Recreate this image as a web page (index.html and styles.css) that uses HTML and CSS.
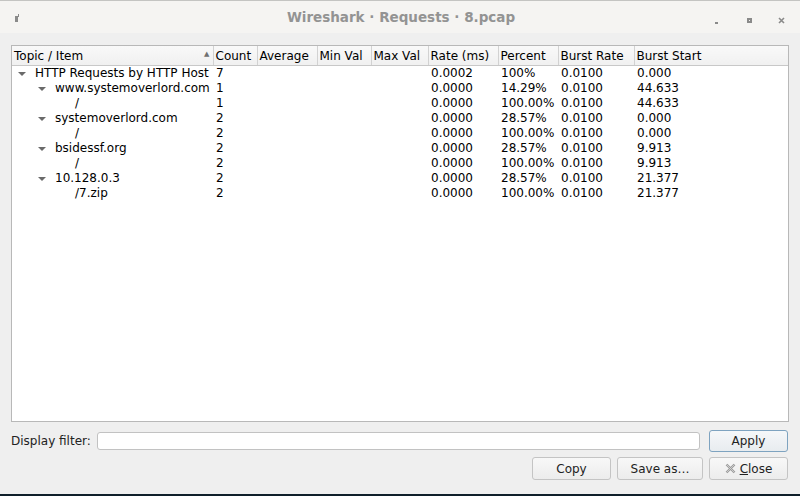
FILE: index.html
```html
<!DOCTYPE html>
<html>
<head>
<meta charset="utf-8">
<link rel="stylesheet" href="styles.css">
</head>
<body>
<div class="window">
  <div class="titlebar">
    <div class="tb-icon"><svg width="6" height="8" viewBox="0 0 6 8"><rect x="0" y="2" width="3" height="6" fill="#8a8a8a"/><rect x="3" y="0" width="1" height="3" fill="#8a8a8a"/></svg></div>
    <div class="tb-title">Wireshark · Requests · 8.pcap</div>
    <div class="tb-buttons">
      <span class="tb-btn"><svg width="8" height="8" viewBox="0 0 8 8"><rect x="1" y="5" width="3" height="2" fill="#8a8a8a"/></svg></span>
      <span class="tb-btn"><svg width="8" height="8" viewBox="0 0 8 8"><rect x="1" y="1" width="5" height="5" fill="#8a8a8a"/><rect x="3" y="3" width="1" height="1" fill="#f5f4f2"/></svg></span>
      <span class="tb-btn"><svg width="8" height="8" viewBox="0 0 8 8"><path d="M1 1 L6 6 M6 1 L1 6" stroke="#8a8a8a" stroke-width="1.6"/></svg></span>
    </div>
  </div>
  <div class="content">
    <div class="tree">
      <table>
        <colgroup>
          <col style="width:201px"><col style="width:44px"><col style="width:60px"><col style="width:54px"><col style="width:57px"><col style="width:70px"><col style="width:60px"><col style="width:76px"><col>
        </colgroup>
        <thead>
          <tr>
            <th class="sorted">Topic / Item<span class="sort">▲</span></th><th>Count</th><th>Average</th><th>Min Val</th><th>Max Val</th><th>Rate (ms)</th><th>Percent</th><th>Burst Rate</th><th class="last">Burst Start</th>
          </tr>
        </thead>
        <tbody>
          <tr><td class="l0"><span class="exp"></span>HTTP Requests by HTTP Host</td><td>7</td><td></td><td></td><td></td><td>0.0002</td><td>100%</td><td>0.0100</td><td>0.000</td></tr>
          <tr><td class="l1"><span class="exp"></span>www.systemoverlord.com</td><td>1</td><td></td><td></td><td></td><td>0.0000</td><td>14.29%</td><td>0.0100</td><td>44.633</td></tr>
          <tr><td class="l2">/</td><td>1</td><td></td><td></td><td></td><td>0.0000</td><td>100.00%</td><td>0.0100</td><td>44.633</td></tr>
          <tr><td class="l1"><span class="exp"></span>systemoverlord.com</td><td>2</td><td></td><td></td><td></td><td>0.0000</td><td>28.57%</td><td>0.0100</td><td>0.000</td></tr>
          <tr><td class="l2">/</td><td>2</td><td></td><td></td><td></td><td>0.0000</td><td>100.00%</td><td>0.0100</td><td>0.000</td></tr>
          <tr><td class="l1"><span class="exp"></span>bsidessf.org</td><td>2</td><td></td><td></td><td></td><td>0.0000</td><td>28.57%</td><td>0.0100</td><td>9.913</td></tr>
          <tr><td class="l2">/</td><td>2</td><td></td><td></td><td></td><td>0.0000</td><td>100.00%</td><td>0.0100</td><td>9.913</td></tr>
          <tr><td class="l1"><span class="exp"></span>10.128.0.3</td><td>2</td><td></td><td></td><td></td><td>0.0000</td><td>28.57%</td><td>0.0100</td><td>21.377</td></tr>
          <tr><td class="l2">/7.zip</td><td>2</td><td></td><td></td><td></td><td>0.0000</td><td>100.00%</td><td>0.0100</td><td>21.377</td></tr>
        </tbody>
      </table>
    </div>
    <div class="filter-row">
      <label class="filter-label">Display filter:</label>
      <div class="filter-input"></div>
      <button class="btn btn-default">Apply</button>
    </div>
    <div class="button-row">
      <button class="btn">Copy</button>
      <button class="btn btn-save">Save as…</button>
      <button class="btn"><svg class="x-icon" width="11" height="11" viewBox="0 0 11 11"><path d="M1.5 1.5 L9.5 9.5 M9.5 1.5 L1.5 9.5" stroke="#9a9a9a" stroke-width="2.4"/><path d="M1.5 1.5 L9.5 9.5 M9.5 1.5 L1.5 9.5" stroke="#d8d8d8" stroke-width="0.8"/></svg><span class="ul">C</span>lose</button>
    </div>
  </div>
</div>
</body>
</html>
```
FILE: styles.css
```css
html, body {
  margin: 0;
  padding: 0;
  background: #0f1f2a;
}
.window {
  width: 800px;
  height: 494px;
  background: #efefef;
  font-family: "DejaVu Sans", sans-serif;
  font-size: 12px;
  color: #000;
  display: flex;
  flex-direction: column;
  overflow: hidden;
}
.titlebar {
  height: 33px;
  box-sizing: border-box;
  border-top: 1px solid #c4c4c2;
  background: #f5f4f2;
  display: flex;
  align-items: center;
}
.tb-icon {
  width: 30px;
  padding-left: 15px;
  box-sizing: border-box;
  display: flex;
  align-items: center;
  padding-top: 2px;
}
.tb-title {
  flex: 1;
  text-align: center;
  font-weight: bold;
  font-size: 13.5px;
  color: #939393;
  padding-left: 58px;
}
.tb-buttons {
  display: flex;
  gap: 24px;
  padding-right: 14px;
  align-items: center;
  padding-top: 2px;
}
.tb-btn {
  width: 8px;
  height: 8px;
  display: block;
}
.content {
  flex: 1;
  display: flex;
  flex-direction: column;
  padding: 12px 11px 0 11px;
}
.tree {
  height: 377px;
  box-sizing: border-box;
  border: 1px solid #b8b8b8;
  background: #fff;
  overflow: hidden;
}
table {
  border-collapse: collapse;
  table-layout: fixed;
  width: 100%;
}
th {
  height: 19px;
  padding: 0 0 0 2px;
  text-align: left;
  font-weight: normal;
  background: linear-gradient(#f9f9f9, #f0f0f0);
  border-right: 1px solid #d2d2d2;
  border-bottom: 1px solid #c8c8c8;
  white-space: nowrap;
  overflow: hidden;
}
th.last { border-right: none; }
th.sorted { position: relative; }
.sort {
  position: absolute;
  right: 3px;
  top: 4px;
  font-size: 7px;
  color: #707070;
}
td {
  height: 15px;
  padding: 0 0 0 3px;
  line-height: 15px;
  white-space: nowrap;
  overflow: hidden;
}
td.l0 { padding-left: 23px; position: relative; }
td.l1 { padding-left: 43px; position: relative; }
td.l2 { padding-left: 63px; }
.exp {
  position: absolute;
  top: 6px;
  width: 0;
  height: 0;
  border-left: 4px solid transparent;
  border-right: 4px solid transparent;
  border-top: 4px solid #6a6a6a;
}
td.l0 .exp { left: 6px; }
td.l1 .exp { left: 26px; }
.filter-row {
  display: flex;
  align-items: center;
  margin-top: 8px;
  height: 21px;
  padding-right: 1px;
}
.filter-label {
  width: 86px;
  color: #222;
}
.filter-input {
  width: 603px;
  height: 18px;
  box-sizing: border-box;
  border: 1px solid #c2c2c2;
  border-radius: 3px;
  background: #fff;
}
.btn {
  font-family: "DejaVu Sans", sans-serif;
  font-size: 12px;
  color: #222;
  width: 79px;
  height: 23px;
  box-sizing: border-box;
  border: 1px solid #c4c4c4;
  border-radius: 3px;
  background: linear-gradient(#f8f8f8, #ececec);
  padding: 0;
  display: flex;
  align-items: center;
  justify-content: center;
}
.btn-default {
  margin-left: 9px;
  height: 22px;
  border-color: #7ea3c0;
  background: linear-gradient(#f5f7f9, #e8ecef);
}
.button-row {
  display: flex;
  justify-content: flex-end;
  gap: 6px;
  margin-top: 6px;
  padding-right: 1px;
}
.btn-save { width: 86px; }
.x-icon { margin-right: 4px; }
.ul { text-decoration: underline; }
```
